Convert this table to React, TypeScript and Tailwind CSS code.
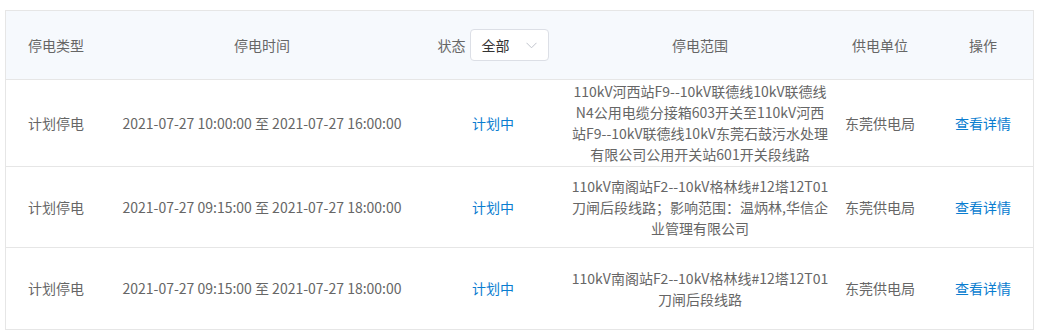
import React from "react";

interface Outage {
  type: string;
  time: string;
  status: string;
  range: string;
  unit: string;
}

const outages: Outage[] = [
  {
    type: "计划停电",
    time: "2021-07-27 10:00:00 至 2021-07-27 16:00:00",
    status: "计划中",
    range:
      "110kV河西站F9--10kV联德线10kV联德线N4公用电缆分接箱603开关至110kV河西站F9--10kV联德线10kV东莞石鼓污水处理有限公司公用开关站601开关段线路",
    unit: "东莞供电局",
  },
  {
    type: "计划停电",
    time: "2021-07-27 09:15:00 至 2021-07-27 18:00:00",
    status: "计划中",
    range: "110kV南阁站F2--10kV格林线#12塔12T01刀闸后段线路；影响范围：温炳林,华信企业管理有限公司",
    unit: "东莞供电局",
  },
  {
    type: "计划停电",
    time: "2021-07-27 09:15:00 至 2021-07-27 18:00:00",
    status: "计划中",
    range: "110kV南阁站F2--10kV格林线#12塔12T01刀闸后段线路",
    unit: "东莞供电局",
  },
];

const cols = "grid grid-cols-[100px_312px_150px_264px_96px_1fr]";

const App: React.FC = () => {
  return (
    <div className="w-[1039px] h-[331px] bg-white pt-[10px] pl-[5px] pr-[5px] font-['Noto_Sans_CJK_SC',sans-serif] text-[14px] text-[#666]">
      <div className="border border-[#e6e6e6]">
        {/* Header */}
        <div className={`${cols} h-[69px] items-center bg-[#f6f9fd] border-b border-[#e6e6e6]`}>
          <div className="text-center">停电类型</div>
          <div className="text-center">停电时间</div>
          <div className="flex items-center justify-center">
            <span className="mr-[4px]">状态</span>
            <div className="flex items-center justify-between w-[79px] h-[32px] border border-[#dcdfe6] rounded-[4px] bg-white pl-[11px] pr-[11px] text-[#333]">
              <span>全部</span>
              <svg width="11" height="7" viewBox="0 0 11 7" fill="none">
                <path d="M0.5 0.8L5.5 5.8L10.5 0.8" stroke="#c0c4cc" strokeWidth="1" />
              </svg>
            </div>
          </div>
          <div className="text-center">停电范围</div>
          <div className="text-center">供电单位</div>
          <div className="text-center pl-[5px]">操作</div>
        </div>

        {/* Rows */}
        {outages.map((o, i) => (
          <div
            key={i}
            className={`${cols} min-h-[81px] py-[1px] items-center leading-[21px] ${
              i < outages.length - 1 ? "border-b border-[#e6e6e6]" : ""
            }`}
          >
            <div className="text-center">{o.type}</div>
            <div className="text-center whitespace-nowrap">{o.time}</div>
            <div className="text-center text-[#0a7dd0]">{o.status}</div>
            <div className="text-center px-[2px] break-all">{o.range}</div>
            <div className="text-center">{o.unit}</div>
            <div className="text-center pl-[5px] text-[#0a7dd0] cursor-pointer">查看详情</div>
          </div>
        ))}
      </div>
    </div>
  );
};

export default App;
